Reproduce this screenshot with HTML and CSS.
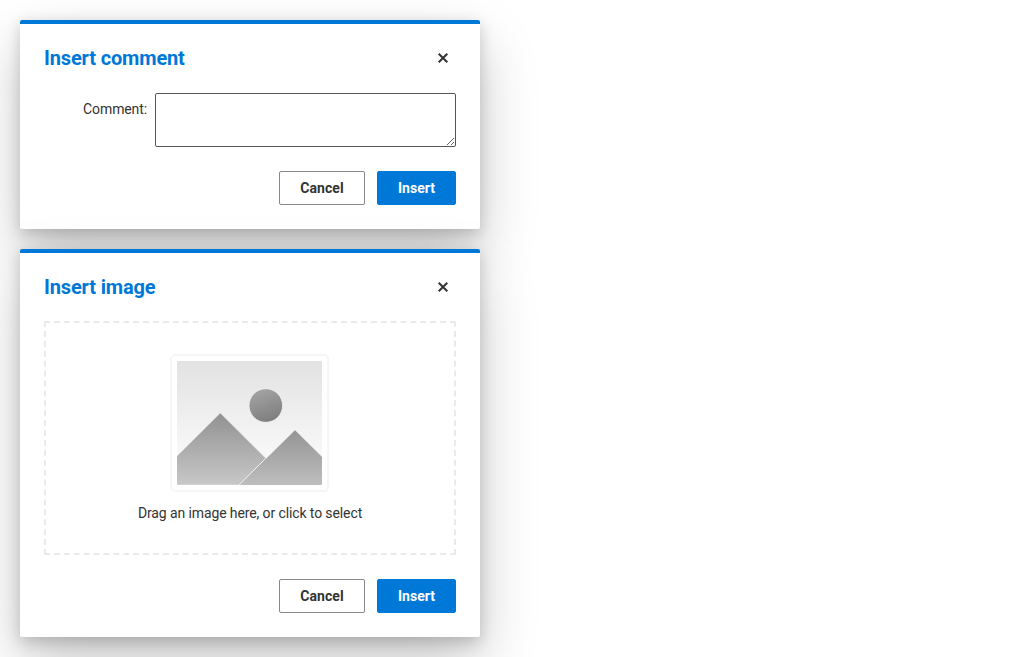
FILE: index.html
```html
<!DOCTYPE html>
<html lang="en">
<head>
<meta charset="utf-8">
<title>Dialogs</title>
<link rel="stylesheet" href="styles.css">
</head>
<body>
<section class="dialog">
  <header class="dialog-header">
    <h2 class="dialog-title">Insert comment</h2>
    <button class="dialog-close" aria-label="Close"><svg width="10" height="10" viewBox="0 0 10 10"><path d="M.7.7 9.3 9.3M9.3.7.7 9.3" stroke="#333" stroke-width="2"/></svg></button>
  </header>
  <div class="field">
    <label class="field-label" for="comment">Comment:</label>
    <textarea class="field-input" id="comment"></textarea>
  </div>
  <footer class="dialog-actions">
    <button class="button">Cancel</button>
    <button class="button button-primary">Insert</button>
  </footer>
</section>
<section class="dialog">
  <header class="dialog-header">
    <h2 class="dialog-title">Insert image</h2>
    <button class="dialog-close" aria-label="Close"><svg width="10" height="10" viewBox="0 0 10 10"><path d="M.7.7 9.3 9.3M9.3.7.7 9.3" stroke="#333" stroke-width="2"/></svg></button>
  </header>
  <div class="dropzone">
    <svg class="placeholder" width="160" height="140" viewBox="0 0 160 140">
      <defs>
        <linearGradient id="sky" x2="0" y2="1"><stop stop-color="#e2e2e2"/><stop offset="1" stop-color="#fff"/></linearGradient>
        <linearGradient id="hill" x2="0" y2="1"><stop stop-color="#919191"/><stop offset="1" stop-color="#c8c8c8"/></linearGradient>
        <linearGradient id="hill-front" x2="0" y2="1"><stop stop-color="#949494"/><stop offset="1" stop-color="#bebebe"/></linearGradient>
        <linearGradient id="sun" x1=".3" x2=".7" y2="1"><stop stop-color="#a4a4a4"/><stop offset="1" stop-color="#7c7c7c"/></linearGradient>
        <clipPath id="photo"><rect x="7.5" y="8" width="145" height="124" rx="1"/></clipPath>
      </defs>
      <rect x="1.5" y="2" width="157" height="136" rx="4" fill="#fff" stroke="#f6f6f6" stroke-width="2"/>
      <g clip-path="url(#photo)">
        <path fill="url(#sky)" d="M7 8h146v124H7z"/>
        <path fill="url(#hill)" stroke="#eee" stroke-width=".5" d="M0 110.5 50.8 60 123 132H0z"/>
        <path fill="url(#hill-front)" d="M70 132 125.5 77 181 132z"/>
        <path fill="none" stroke="#eee" d="M69.5 132 96 105.5"/>
        <path fill="none" stroke="#eee" stroke-width=".5" d="M96 105.5 125.5 76.8 155 106"/>
        <circle cx="96.3" cy="52.5" r="16.8" fill="url(#sun)" stroke="#f5f5f5" stroke-width=".8"/>
      </g>
    </svg>
    <span class="dropzone-text">Drag an image here, or click to select</span>
  </div>
  <footer class="dialog-actions">
    <button class="button">Cancel</button>
    <button class="button button-primary">Insert</button>
  </footer>
</section>
</body>
</html>
```
FILE: styles.css
```css
* { box-sizing: border-box; }
body {
  margin: 0;
  padding: 20px;
  height: 657px;
  overflow: hidden;
  display: flex;
  flex-direction: column;
  gap: 20px;
  background: #fff;
  color: #333;
  font: 14px/20px Roboto, sans-serif;
  letter-spacing: -.11px;
}
.dialog {
  width: 460px;
  padding: 20px 24px 24px;
  background: #fff;
  border-top: 4px solid #0078d7;
  border-radius: 2px;
  box-shadow: 0 25.6px 57.6px rgba(0, 0, 0, .22), 0 4.8px 14.4px rgba(0, 0, 0, .18);
}
.dialog-header {
  display: flex;
  align-items: center;
  justify-content: space-between;
  height: 28px;
}
.dialog-title {
  margin: 0;
  color: #0078d7;
  font-size: 20px;
  line-height: 28px;
  font-weight: 700;
  letter-spacing: -.15px;
}
.dialog-close {
  display: flex;
  align-items: center;
  justify-content: center;
  width: 26px;
  height: 26px;
  padding: 0;
  border: 0;
  background: none;
}
.field {
  display: flex;
  gap: 8px;
  margin-top: 21px;
}
.field-label {
  width: 103px;
  padding-top: 6px;
  text-align: right;
}
.field-input {
  flex: 1;
  height: 54px;
  border: 1px solid #555;
  border-radius: 2px;
  background: #fff;
}
.dialog-actions {
  display: flex;
  justify-content: flex-end;
  gap: 12px;
  margin-top: 24px;
}
.button {
  width: 86px;
  height: 34px;
  padding: 0;
  border: 1px solid #888;
  border-radius: 2px;
  background: #fff;
  color: #333;
  font: 700 14px/20px Roboto, sans-serif;
  letter-spacing: .05px;
}
.button-primary {
  width: 79px;
  border-color: #0078d7;
  background: #0078d7;
  color: #fff;
}
.dropzone {
  display: flex;
  flex-direction: column;
  align-items: center;
  height: 234px;
  margin-top: 20px;
  padding-top: 30px;
  border: 2px dashed #eaeaea;
}
.placeholder { display: block; margin-right: 1px; transform: translateX(-.5px); }
.dropzone-text { margin-top: 10px; }
```
